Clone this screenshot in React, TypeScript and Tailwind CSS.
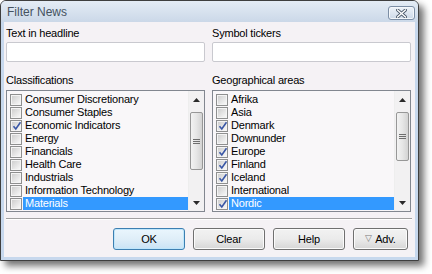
import React from "react";

type Item = { label: string; checked: boolean; selected?: boolean };

const leftItems: Item[] = [
  { label: "Consumer Discretionary", checked: false },
  { label: "Consumer Staples", checked: false },
  { label: "Economic Indicators", checked: true },
  { label: "Energy", checked: false },
  { label: "Financials", checked: false },
  { label: "Health Care", checked: false },
  { label: "Industrials", checked: false },
  { label: "Information Technology", checked: false },
  { label: "Materials", checked: false, selected: true },
];

const rightItems: Item[] = [
  { label: "Afrika", checked: false },
  { label: "Asia", checked: false },
  { label: "Denmark", checked: true },
  { label: "Downunder", checked: false },
  { label: "Europe", checked: true },
  { label: "Finland", checked: true },
  { label: "Iceland", checked: true },
  { label: "International", checked: false },
  { label: "Nordic", checked: true, selected: true },
];

function CheckBox({ checked }: { checked: boolean }) {
  return (
    <span className="relative w-[12px] h-[12px] shrink-0 border border-[#8e8f8f] bg-[#f4f4f4] flex items-center justify-center">
      <span className="w-[8px] h-[8px] bg-gradient-to-br from-[#cfcfcf] to-[#f7f7f7]" />
      {checked && (
        <svg className="absolute left-[1px] top-[0px]" width="10" height="10" viewBox="0 0 10 10">
          <path d="M1.5 5.2 L3.8 8 L8.5 1.2" fill="none" stroke="#3a57a6" strokeWidth="1.6" />
        </svg>
      )}
    </span>
  );
}

function Scrollbar({ thumbH }: { thumbH: number }) {
  return (
    <div className="w-[16px] shrink-0 bg-[#f2f1f2] border-l border-[#eeeeee] flex flex-col">
      <div className="h-[17px] flex items-center justify-center">
        <svg width="7" height="4" viewBox="0 0 7 4">
          <path d="M3.5 0 L7 4 L0 4 Z" fill="#2a2a2a" />
        </svg>
      </div>
      <div className="h-[4px]" />
      <div
        className="mx-[1px] rounded-[2px] border border-[#979797] bg-gradient-to-r from-[#f3f3f3] via-[#e6e6e6] to-[#d3d3d3] flex flex-col items-center justify-center gap-[1px]"
        style={{ height: thumbH }}
      >
        <span className="w-[7px] h-[1px] bg-[#6e6e6e]" />
        <span className="w-[7px] h-[1px] bg-[#6e6e6e]" />
        <span className="w-[7px] h-[1px] bg-[#6e6e6e]" />
      </div>
      <div className="flex-1" />
      <div className="h-[17px] flex items-center justify-center">
        <svg width="7" height="4" viewBox="0 0 7 4">
          <path d="M0 0 L7 0 L3.5 4 Z" fill="#2a2a2a" />
        </svg>
      </div>
    </div>
  );
}

function ListBox({ items, thumbH }: { items: Item[]; thumbH: number }) {
  return (
    <div className="h-[122px] border border-[#828790] bg-[#f9f7f9] flex">
      <div className="flex-1 pl-[3px] pt-[2px] overflow-hidden">
        {items.map((it) => (
          <div key={it.label} className="h-[13px] flex items-center">
            <CheckBox checked={it.checked} />
            <span
              className={
                "ml-[1px] pl-[2px] flex-1 h-[13px] leading-[13px] " +
                (it.selected ? "bg-[#3399ff] text-white" : "text-black")
              }
            >
              {it.label}
            </span>
          </div>
        ))}
      </div>
      <Scrollbar thumbH={thumbH} />
    </div>
  );
}

function Btn({ children, primary, w }: { children: React.ReactNode; primary?: boolean; w: string }) {
  return (
    <div
      className={
        "h-[22px] rounded-[3px] border flex items-center justify-center text-black " +
        w +
        (primary
          ? " border-[#3c7fb1] bg-gradient-to-b from-[#eaf6fd] via-[#dfeef8] to-[#c9e3f5] shadow-[inset_0_0_0_1px_#bfe6fb]"
          : " border-[#707070] bg-gradient-to-b from-[#f2f2f2] via-[#ebebeb] to-[#d6d6d6] shadow-[inset_0_0_0_1px_#fbfbfb]")
      }
    >
      {children}
    </div>
  );
}

export default function App() {
  return (
    <div
      className="w-[432px] h-[274px] bg-white relative overflow-hidden text-[11px] tracking-[-0.2px]"
      style={{ fontFamily: '"Liberation Sans", Arial, sans-serif' }}
    >
      <div className="w-[419px] h-[261px] border border-[#3f3f3f] rounded-t-[6px] bg-[#c7d8ed] shadow-[5px_5px_7px_rgba(0,0,0,0.55)] flex flex-col overflow-hidden">
        {/* Title bar */}
        <div className="h-[21px] shrink-0 bg-gradient-to-b from-[#e4ecf5] to-[#cbd8e8] flex items-center pl-[6px] pr-[3px] relative">
          <span className="text-[12px] tracking-normal text-[#45525f]">Filter News</span>
          <div className="ml-auto mt-[3px] w-[27px] h-[14px] rounded-[3px] border border-[#7c8ea5] bg-gradient-to-b from-[#eef3f9] to-[#cdd9e8] flex items-center justify-center shadow-[inset_0_0_0_1px_#f4f7fb]">
            <svg width="11" height="9" viewBox="0 0 11 9">
              <path d="M1.5 1 L9.5 8 M9.5 1 L1.5 8" stroke="#4c5a6c" strokeWidth="3.2" strokeLinecap="square" />
              <path d="M1.5 1 L9.5 8 M9.5 1 L1.5 8" stroke="#ffffff" strokeWidth="1.4" strokeLinecap="square" />
            </svg>
          </div>
        </div>
        {/* Body */}
        <div className="flex-1 mx-[3px] mb-[3px] bg-[#f5f2f5] pl-[2px] pr-[3px] pt-[4px] flex flex-col">
          <div className="grid grid-cols-[199px_199px] gap-x-[7px]">
            <div className="leading-[14px] text-black">Text in headline</div>
            <div className="leading-[14px] text-black">Symbol tickers</div>
            <div className="mt-[2px] h-[20px] rounded-[2px] border border-[#c9c9cf] bg-white" />
            <div className="mt-[2px] h-[20px] rounded-[2px] border border-[#c9c9cf] bg-white" />
            <div className="mt-[11px] leading-[14px] text-black">Classifications</div>
            <div className="mt-[11px] leading-[14px] text-black">Geographical areas</div>
            <div className="mt-[3px]">
              <ListBox items={leftItems} thumbH={58} />
            </div>
            <div className="mt-[3px]">
              <ListBox items={rightItems} thumbH={49} />
            </div>
          </div>
          <div className="mt-[6px] h-[2px] border-t border-[#a0a0a0] border-b border-b-white" />
          <div className="mt-[8px] flex justify-end gap-[8px] pr-[4px]">
            <Btn w="w-[72px]" primary>
              OK
            </Btn>
            <Btn w="w-[72px]">Clear</Btn>
            <Btn w="w-[72px]">Help</Btn>
            <Btn w="w-[55px]">
              <span className="text-[#777] text-[9px] mr-[3px]">▽</span>Adv.
            </Btn>
          </div>
        </div>
      </div>
    </div>
  );
}
